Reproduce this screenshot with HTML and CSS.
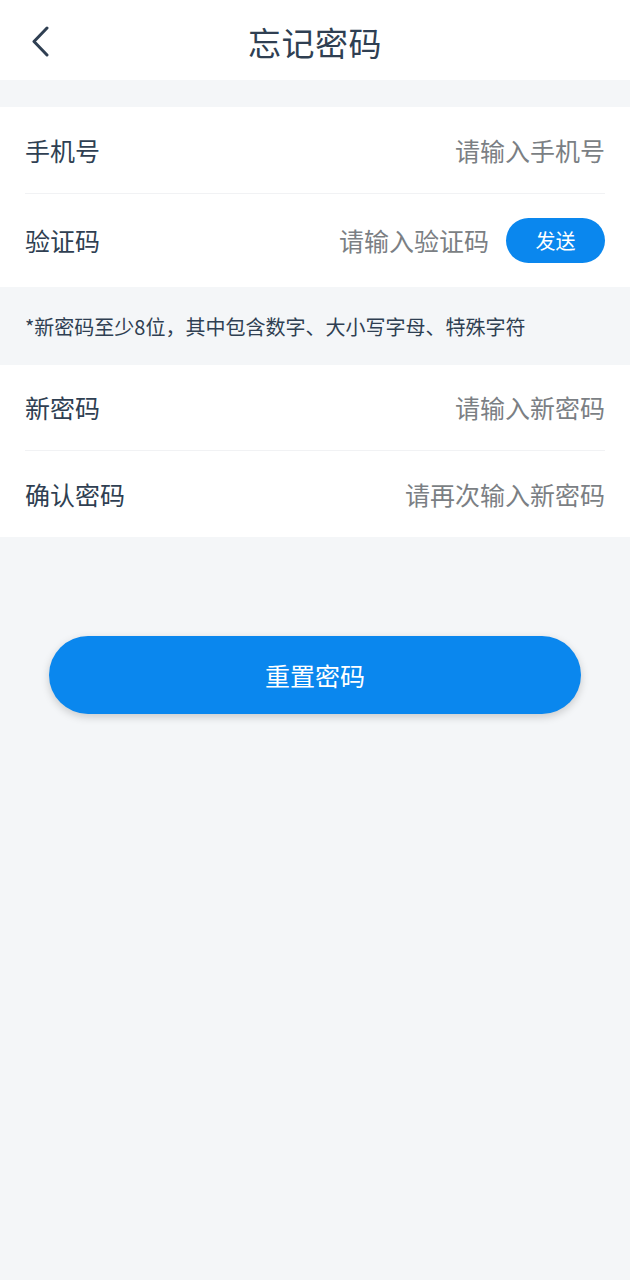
FILE: index.html
```html
<!DOCTYPE html>
<html lang="zh-CN">
<head>
<meta charset="utf-8">
<title>忘记密码</title>
<link rel="stylesheet" href="styles.css">
</head>
<body>
<div class="page">
  <header class="topbar">
    <span class="back">
      <svg width="24" height="32" viewBox="0 0 24 32"><polyline points="16,3 3,16.5 16,30" fill="none" stroke="#2f3f52" stroke-width="3" stroke-linecap="round" stroke-linejoin="round"/></svg>
    </span>
    <h1 class="title">忘记密码</h1>
  </header>

  <section class="group first">
    <div class="row">
      <span class="label">手机号</span>
      <span class="ph">请输入手机号</span>
    </div>
    <div class="row tall">
      <span class="label">验证码</span>
      <span class="right"><span class="ph">请输入验证码</span><span class="send">发送</span></span>
    </div>
  </section>

  <p class="note">*新密码至少8位，其中包含数字、大小写字母、特殊字符</p>

  <section class="group second">
    <div class="row">
      <span class="label">新密码</span>
      <span class="ph">请输入新密码</span>
    </div>
    <div class="row">
      <span class="label">确认密码</span>
      <span class="ph">请再次输入新密码</span>
    </div>
  </section>

  <div class="action">
    <button class="reset">重置密码</button>
  </div>
</div>
</body>
</html>
```

FILE: styles.css
```css
html, body {
  margin: 0;
  padding: 0;
  background: #f4f6f8;
  font-family: "Noto Sans CJK SC", "Noto Sans", sans-serif;
}
.page {
  width: 630px;
  min-height: 1280px;
  background: #f4f6f8;
}
.topbar {
  height: 80px;
  background: #fff;
  display: flex;
  align-items: center;
  justify-content: center;
  position: relative;
}
.back {
  position: absolute;
  left: 31px;
  top: 25px;
  width: 24px;
  height: 32px;
  display: block;
}
.back svg { display: block; }
.title {
  margin: 0;
  font-size: 33px;
  font-weight: 400;
  color: #2f3f52;
  line-height: 1;
  letter-spacing: 0.5px;
  transform: translateY(2px);
}
.group {
  background: #fff;
  padding: 0 25px;
}
.group.first { margin-top: 27px; }
.row {
  display: flex;
  align-items: center;
  justify-content: space-between;
  height: 86px;
  box-sizing: border-box;
}
.row + .row { border-top: 1px solid #f1f2f4; }
.group.first .row.tall { height: 94px; }
.group.second .row:first-child { height: 85px; }
.group.second .row + .row { height: 87px; }
.label {
  font-size: 25px;
  color: #2f3f52;
  line-height: 1;
}
.ph {
  font-size: 25px;
  color: #7b7f84;
  line-height: 1;
}
.right {
  display: flex;
  align-items: center;
  gap: 17px;
}
.send {
  width: 99px;
  height: 45px;
  border-radius: 23px;
  background: #0a87ee;
  color: #fff;
  font-size: 20px;
  display: flex;
  align-items: center;
  justify-content: center;
}
.note {
  margin: 0;
  height: 78px;
  padding: 0 25px;
  display: flex;
  align-items: center;
  font-size: 20px;
  color: #2f3f52;
}
.action {
  padding: 99px 49px 0;
}
.reset {
  width: 532px;
  height: 78px;
  border: none;
  border-radius: 39px;
  background: #0a87ee;
  color: #fff;
  font-family: "Noto Sans CJK SC", "Noto Sans", sans-serif;
  font-size: 25px;
  box-shadow: 0 3px 8px rgba(0, 0, 0, 0.18);
  display: block;
}
```
